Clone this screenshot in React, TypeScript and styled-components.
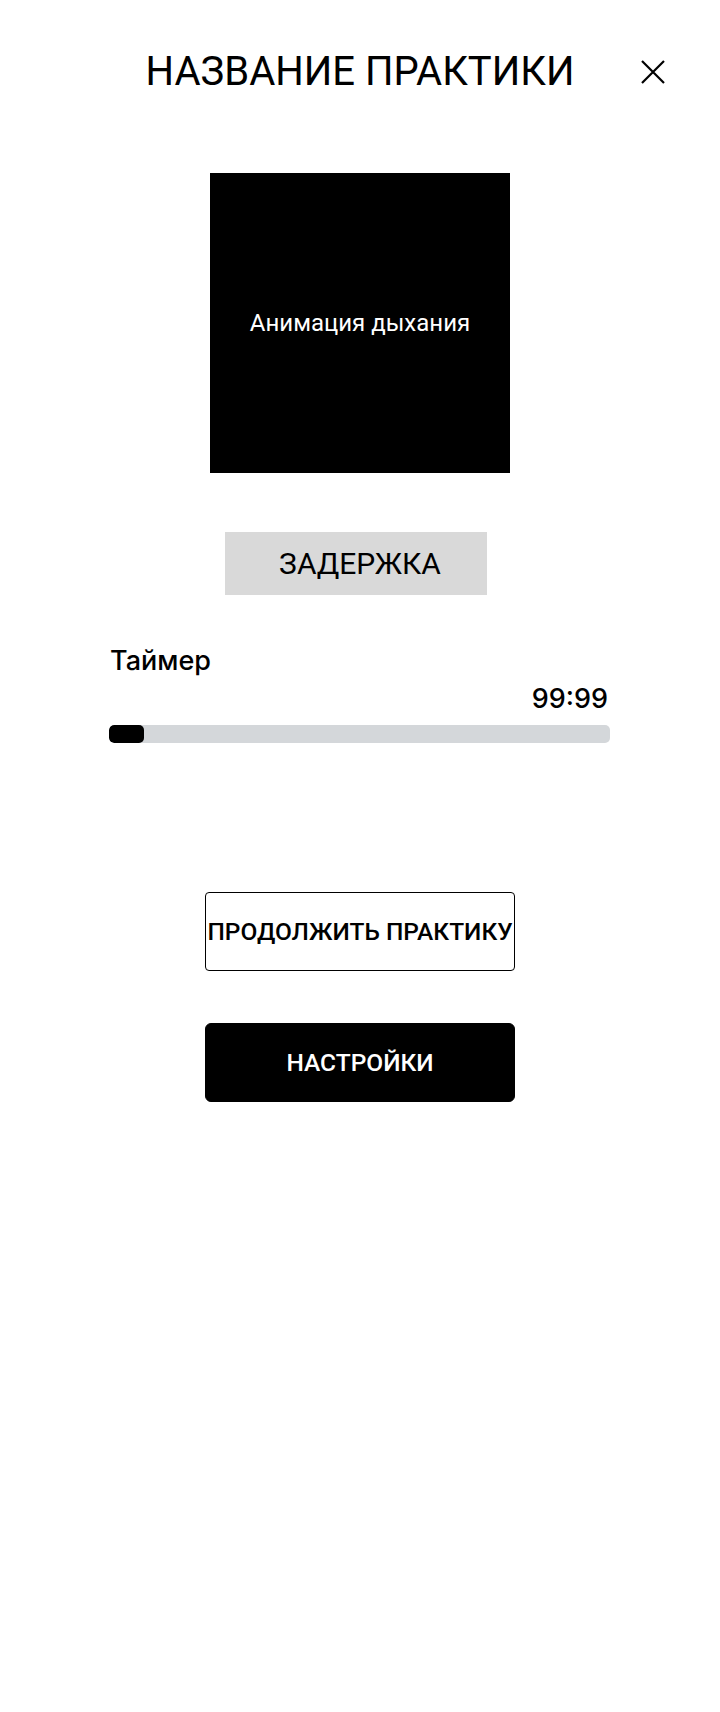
import React from "react";
import styled, { createGlobalStyle } from "styled-components";

const GlobalStyle = createGlobalStyle`
  html, body {
    margin: 0;
    padding: 0;
    background: #ffffff;
  }
  body {
    font-family: Roboto, "Noto Sans", "Liberation Sans", sans-serif;
    color: #000000;
  }
  * { box-sizing: border-box; }
`;

const Page = styled.div`
  width: 720px;
  min-height: 1712px;
  display: flex;
  flex-direction: column;
  align-items: stretch;
  background: #ffffff;
`;

const Header = styled.header`
  display: grid;
  grid-template-columns: 1fr auto 1fr;
  align-items: center;
  margin-top: 48px;
  height: 48px;
`;

const Title = styled.h1`
  grid-column: 2;
  margin: 0;
  text-align: center;
  font-size: 40px;
  font-weight: 400;
  line-height: 48px;
  white-space: nowrap;
`;

const CloseButton = styled.button`
  grid-column: 3;
  justify-self: end;
  margin-right: 55px;
  width: 24px;
  height: 24px;
  padding: 0;
  border: none;
  background: transparent;
  display: flex;
  align-items: center;
  justify-content: center;
  cursor: pointer;
`;

const Animation = styled.div`
  align-self: center;
  width: 300px;
  height: 300px;
  margin-top: 77px;
  background: #000000;
  color: #ffffff;
  display: flex;
  align-items: center;
  justify-content: center;
  font-size: 24px;
  font-weight: 400;
`;

const Phase = styled.div`
  align-self: flex-start;
  margin: 59px 0 0 225px;
  width: 262px;
  height: 63px;
  background: #d9d9d9;
  display: flex;
  align-items: center;
  justify-content: center;
  padding-left: 8px;
  font-size: 30px;
  font-weight: 400;
`;

const TimerSection = styled.section`
  margin: 49px 0 0 109px;
  width: 501px;
  display: flex;
  flex-direction: column;
  font-family: Inter, Roboto, "Liberation Sans", sans-serif;
`;

const TimerLabel = styled.div`
  font-size: 27px;
  font-weight: 500;
  line-height: 33px;
  padding-left: 1px;
`;

const TimerValue = styled.div`
  margin-top: 5px;
  align-self: flex-end;
  font-size: 27px;
  font-weight: 500;
  line-height: 33px;
  margin-right: 2px;
`;

const Track = styled.div`
  margin-top: 10px;
  width: 100%;
  height: 18px;
  background: #d4d7da;
  border-radius: 5px;
  overflow: hidden;
`;

const Fill = styled.div`
  height: 100%;
  background: #000000;
  border-radius: 5px;
`;

const Actions = styled.div`
  margin-top: 149px;
  display: flex;
  flex-direction: column;
  align-items: center;
  gap: 52px;
`;

const ActionButton = styled.button<{ $primary?: boolean }>`
  width: 310px;
  height: 79px;
  padding: 0;
  border: 1px solid #000000;
  border-radius: ${(p) => (p.$primary ? "6px" : "4px")};
  background: ${(p) => (p.$primary ? "#000000" : "#ffffff")};
  color: ${(p) => (p.$primary ? "#ffffff" : "#000000")};
  font-family: Roboto, "Noto Sans", "Liberation Sans", sans-serif;
  font-size: 24.5px;
  font-weight: 500;
  white-space: nowrap;
  display: flex;
  align-items: center;
  justify-content: center;
  cursor: pointer;
`;

export default function App() {
  const progress = 35 / 501;
  return (
    <Page>
      <GlobalStyle />
      <Header>
        <Title>НАЗВАНИЕ ПРАКТИКИ</Title>
        <CloseButton aria-label="Закрыть">
          <svg width="24" height="24" viewBox="0 0 24 24" fill="none">
            <path d="M1 1L23 23M23 1L1 23" stroke="#000" strokeWidth="2.2" />
          </svg>
        </CloseButton>
      </Header>
      <Animation>Анимация дыхания</Animation>
      <Phase>ЗАДЕРЖКА</Phase>
      <TimerSection>
        <TimerLabel>Таймер</TimerLabel>
        <TimerValue>99:99</TimerValue>
        <Track>
          <Fill style={{ width: `${progress * 100}%` }} />
        </Track>
      </TimerSection>
      <Actions>
        <ActionButton>ПРОДОЛЖИТЬ ПРАКТИКУ</ActionButton>
        <ActionButton $primary>НАСТРОЙКИ</ActionButton>
      </Actions>
    </Page>
  );
}
